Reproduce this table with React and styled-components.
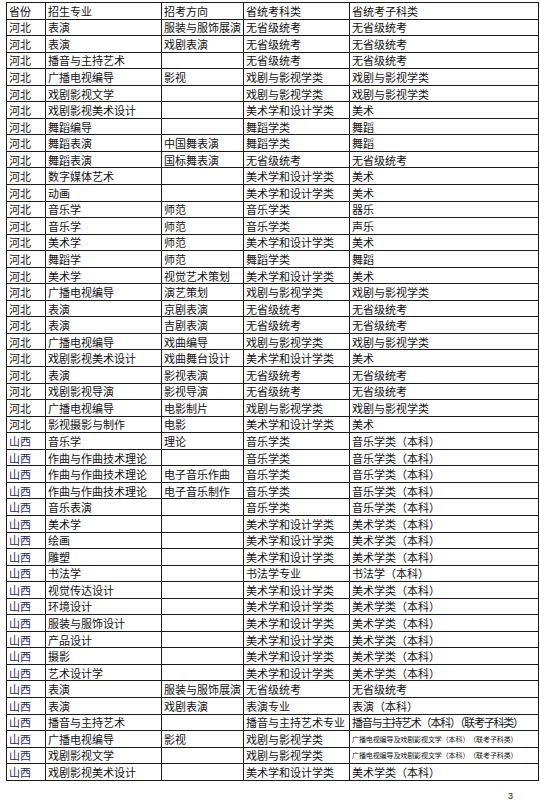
import React from "react";
import styled, { createGlobalStyle } from "styled-components";

const Global = createGlobalStyle`
  html, body { margin: 0; padding: 0; background: #fff; }
  body { font-family: "Noto Sans CJK SC", "Noto Sans", sans-serif; }
`;

const Page = styled.div`
  width: 540px;
  height: 805px;
  box-sizing: border-box;
  padding: 2px 0 0 6px;
  display: flex;
  flex-direction: column;
`;

const Table = styled.table`
  border-collapse: collapse;
  table-layout: fixed;
  width: 532px;
`;

const Row = styled.tr`
  height: 16.56px;
`;

const Cell = styled.td`
  border: 1px solid #1a1a1a;
  padding: 0 0 0 2px;
  font-size: ${(p) => (p.$tiny ? "7px" : "11px")};
  line-height: 14px;
  color: ${(p) => (p.$blue ? "#1e2a66" : "#111")};
  white-space: nowrap;
  overflow: hidden;
  vertical-align: middle;
  letter-spacing: ${(p) => (p.$tiny ? "-0.1px" : p.$tight ? "-1.2px" : "0")};
`;

const Footer = styled.div`
  display: flex;
  justify-content: flex-end;
  padding: 10px 27px 0 0;
  font-family: "Liberation Sans", Arial, sans-serif;
  font-size: 9px;
  color: #222;
`;

const widths = [39, 116, 82, 106, 189];

const header = ["省份", "招生专业", "招考方向", "省统考科类", "省统考子科类"];

const W = "无省级统考";
const X = "戏剧与影视学类";
const M = "美术学和设计学类";
const Y = "音乐学类";
const YK = "音乐学类（本科）";
const MK = "美术学类（本科）";
const SMALL = "广播电视编导及戏剧影视文学（本科）　（联考子科类）";
const LONG = "播音与主持艺术（本科）（联考子科类）";

const rows = [
  ["河北", "表演", "服装与服饰展演", W, W],
  ["河北", "表演", "戏剧表演", W, W],
  ["河北", "播音与主持艺术", "", W, W],
  ["河北", "广播电视编导", "影视", X, X],
  ["河北", "戏剧影视文学", "", X, X],
  ["河北", "戏剧影视美术设计", "", M, "美术"],
  ["河北", "舞蹈编导", "", "舞蹈学类", "舞蹈"],
  ["河北", "舞蹈表演", "中国舞表演", "舞蹈学类", "舞蹈"],
  ["河北", "舞蹈表演", "国标舞表演", W, W],
  ["河北", "数字媒体艺术", "", M, "美术"],
  ["河北", "动画", "", M, "美术"],
  ["河北", "音乐学", "师范", Y, "器乐"],
  ["河北", "音乐学", "师范", Y, "声乐"],
  ["河北", "美术学", "师范", M, "美术"],
  ["河北", "舞蹈学", "师范", "舞蹈学类", "舞蹈"],
  ["河北", "美术学", "视觉艺术策划", M, "美术"],
  ["河北", "广播电视编导", "演艺策划", X, X],
  ["河北", "表演", "京剧表演", W, W],
  ["河北", "表演", "吉剧表演", W, W],
  ["河北", "广播电视编导", "戏曲编导", X, X],
  ["河北", "戏剧影视美术设计", "戏曲舞台设计", M, "美术"],
  ["河北", "表演", "影视表演", W, W],
  ["河北", "戏剧影视导演", "影视导演", W, W],
  ["河北", "广播电视编导", "电影制片", X, X],
  ["河北", "影视摄影与制作", "电影", M, "美术"],
  ["山西", "音乐学", "理论", Y, YK],
  ["山西", "作曲与作曲技术理论", "", Y, YK],
  ["山西", "作曲与作曲技术理论", "电子音乐作曲", Y, YK],
  ["山西", "作曲与作曲技术理论", "电子音乐制作", Y, YK],
  ["山西", "音乐表演", "", Y, YK],
  ["山西", "美术学", "", M, MK],
  ["山西", "绘画", "", M, MK],
  ["山西", "雕塑", "", M, MK],
  ["山西", "书法学", "", "书法学专业", "书法学（本科）"],
  ["山西", "视觉传达设计", "", M, MK],
  ["山西", "环境设计", "", M, MK],
  ["山西", "服装与服饰设计", "", M, MK],
  ["山西", "产品设计", "", M, MK],
  ["山西", "摄影", "", M, MK],
  ["山西", "艺术设计学", "", M, MK],
  ["山西", "表演", "服装与服饰展演", W, W],
  ["山西", "表演", "戏剧表演", "表演专业", "表演（本科）"],
  ["山西", "播音与主持艺术", "", "播音与主持艺术专业", LONG],
  ["山西", "广播电视编导", "影视", X, SMALL],
  ["山西", "戏剧影视文学", "", X, SMALL],
  ["山西", "戏剧影视美术设计", "", M, MK],
];

export default function App() {
  return (
    <Page>
      <Global />
      <Table>
        <colgroup>
          {widths.map((w, i) => (
            <col key={i} style={{ width: w }} />
          ))}
        </colgroup>
        <tbody>
          <Row>
            {header.map((h, i) => (
              <Cell key={i}>{h}</Cell>
            ))}
          </Row>
          {rows.map((r, ri) => (
            <Row key={ri}>
              {r.map((c, ci) => (
                <Cell
                  key={ci}
                  $blue={ci === 0 && c === "山西"}
                  $tiny={c === SMALL}
                  $tight={c === LONG}
                >
                  {c}
                </Cell>
              ))}
            </Row>
          ))}
        </tbody>
      </Table>
      <Footer>3</Footer>
    </Page>
  );
}
